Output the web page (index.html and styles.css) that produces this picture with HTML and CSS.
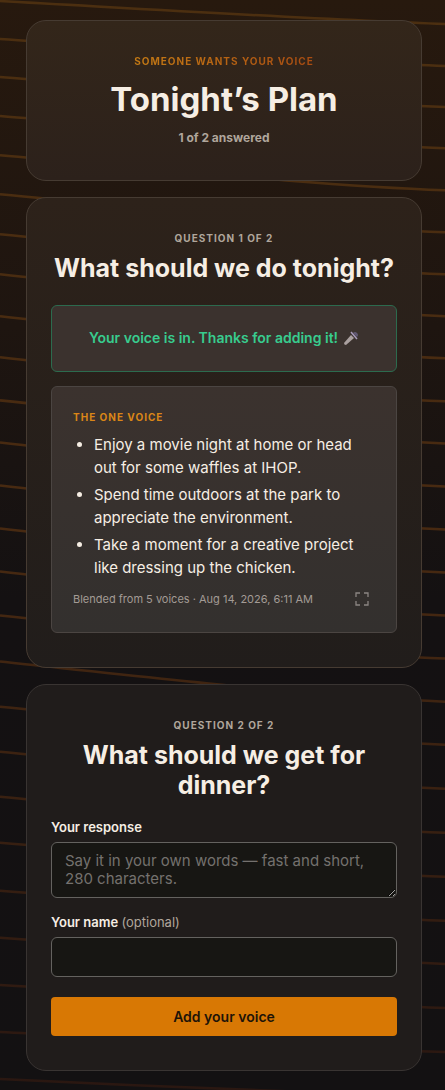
FILE: index.html
```html
<!DOCTYPE html>
<html lang="en">
<head>
<meta charset="utf-8">
<meta name="viewport" content="width=device-width, initial-scale=1">
<title>Tonight’s Plan</title>
<link rel="stylesheet" href="styles.css">
</head>
<body>
<svg class="waves" viewBox="0 0 445 1090" preserveAspectRatio="none" aria-hidden="true">
  <defs>
    <linearGradient id="wave" gradientUnits="userSpaceOnUse" x1="0" y1="0" x2="0" y2="1090">
      <stop offset="0" stop-color="#4c2f10"/>
      <stop offset=".5" stop-color="#472911"/>
      <stop offset="1" stop-color="#2a1711"/>
    </linearGradient>
  </defs>
  <path d="M0 1C180 11 330 20 445 24M0 39C180 51 330 62 445 66M0 77C180 91 330 103 445 107M0 116C180 131 330 144 445 148M0 155C180 171 330 186 445 190M0 194C180 211 330 228 445 232M0 234C180 252 330 270 445 274M0 274C180 293 330 312 445 316M0 316C180 335 330 354 445 358M0 357C180 377 330 397 445 401M0 400C180 419 330 439 445 443M0 442C180 462 330 482 445 486M0 485C180 505 330 525 445 529M0 528C180 548 330 568 445 572M0 571C180 591 330 611 445 615M0 615C180 634 330 654 445 658M0 661C180 680 330 697 445 701M0 706C180 723 330 740 445 744M0 751C180 768 330 784 445 788M0 796C180 812 330 828 445 832M0 842C180 857 330 872 445 876M0 890C180 903 330 916 445 920M0 937C180 949 330 959 445 963M0 984C180 994 330 1004 445 1007M0 1031C180 1040 330 1048 445 1051M0 1078C180 1087 330 1092 445 1095"/>
</svg>
<main class="page">
  <header class="card hero">
    <p class="eyebrow"><span class="eyebrow-text">Someone wants your voice</span></p>
    <h1 class="title">Tonight’s Plan</h1>
    <p class="progress">1 of 2 answered</p>
  </header>

  <section class="card question">
    <p class="step">Question 1 of 2</p>
    <h2 class="prompt">What should we do tonight?</h2>
    <p class="notice">Your voice is in. Thanks for adding it!
      <svg class="mic" viewBox="0 0 16 16" aria-hidden="true">
        <path d="M1 13L8 5L11 8L3 15Q1 15 1 13Z" fill="#aaa09f"/>
        <path d="M10 3Q12 1 14 3Q16 5 14 7Z" fill="#605873"/>
        <path d="M8 2L14 9" stroke="#a99cbb" stroke-width="1.5"/>
      </svg>
    </p>
    <article class="answer">
      <h3 class="answer-title">The One Voice</h3>
      <ul class="points">
        <li>Enjoy a movie night at home or head out for some waffles at IHOP.</li>
        <li>Spend time outdoors at the park to appreciate the environment.</li>
        <li>Take a moment for a creative project like dressing up the chicken.</li>
      </ul>
      <footer class="meta">
        <span>Blended from 5 voices · Aug 14, 2026, 6:11 AM</span>
        <button class="expand" type="button" aria-label="Expand">
          <svg viewBox="0 0 14 14" aria-hidden="true"><path d="M1 5V1H5M9 1H13V5M13 9V13H9M5 13H1V9"/></svg>
        </button>
      </footer>
    </article>
  </section>

  <section class="card question">
    <p class="step">Question 2 of 2</p>
    <h2 class="prompt">What should we get for dinner?</h2>
    <form class="form">
      <label class="label" for="response">Your response</label>
      <textarea class="field response" id="response" rows="2" placeholder="Say it in your own words — fast and short, 280 characters."></textarea>
      <label class="label" for="name">Your name <span class="optional">(optional)</span></label>
      <input class="field name" id="name" type="text">
      <button class="submit" type="button">Add your voice</button>
    </form>
  </section>
</main>
</body>
</html>
```
FILE: styles.css
```css
* {
  box-sizing: border-box;
}

body {
  position: relative;
  min-height: 100vh;
  margin: 0;
  background: linear-gradient(#27190e, #1e1510 30%, #141112 55%, #131112);
  color: #f6eee4;
  font-family: Inter, "Liberation Sans", sans-serif;
}

h1, h2, h3, p, ul {
  margin: 0;
}

.waves {
  position: absolute;
  inset: 0;
  width: 100%;
  height: 100%;
}

.waves path {
  fill: none;
  stroke: url(#wave);
  stroke-width: 2.5;
}

.page {
  position: relative;
  display: flex;
  flex-direction: column;
  gap: 16px;
  max-width: 720px;
  margin: 0 auto;
  padding: 20px 23px 20px 26px;
}

.card {
  padding: 32px 24px 34px;
  border: 1px solid #463b32;
  border-radius: 20px;
}

.hero {
  padding-bottom: 33px;
  background: linear-gradient(#33261a, #2c211b);
  text-align: center;
}

.eyebrow {
  font-size: 10px;
  font-weight: 700;
  line-height: 16px;
  letter-spacing: 1px;
  text-transform: uppercase;
}

.eyebrow-text {
  background: linear-gradient(90deg, #c67b14, #a84c12);
  background-clip: text;
  color: transparent;
}

.title {
  margin-top: 10px;
  font-size: 33px;
  font-weight: 700;
  line-height: 40px;
}

.progress {
  margin-top: 10px;
  color: #b0a69c;
  font-size: 12px;
  font-weight: 700;
  line-height: 18px;
}

.question {
  background: linear-gradient(#2d221a, #211d1b);
}

.question + .question {
  border-color: #393432;
  background: #201c1b;
}

.step {
  color: #b0a69c;
  font-size: 10px;
  font-weight: 700;
  line-height: 16px;
  letter-spacing: 1px;
  text-align: center;
  text-transform: uppercase;
}

.prompt {
  margin: 7px -8px 0;
  font-size: 25px;
  font-weight: 700;
  line-height: 30px;
  text-align: center;
}

.notice {
  display: flex;
  align-items: center;
  justify-content: center;
  gap: 5px;
  margin-top: 22px;
  padding: 21px 16px 22px;
  border: 1px solid #2c6b4e;
  border-radius: 6px;
  background: #3b322e;
  color: #38cc8e;
  font-size: 14px;
  font-weight: 600;
  line-height: 22px;
}

.mic {
  width: 16px;
  height: 16px;
}

.answer {
  margin-top: 14px;
  padding: 21px;
  border: 1px solid #4b4542;
  border-radius: 6px;
  background: linear-gradient(#3b322e, #33302e);
}

.answer-title {
  color: #db8617;
  font-size: 10px;
  font-weight: 700;
  line-height: 18px;
  letter-spacing: 1px;
  text-transform: uppercase;
}

.points {
  display: flex;
  flex-direction: column;
  gap: 4px;
  margin-top: 7px;
  padding-left: 21px;
  font-size: 15px;
  font-weight: 400;
  line-height: 23px;
}

.meta {
  display: flex;
  align-items: center;
  justify-content: space-between;
  margin-top: 8px;
  padding-right: 6px;
  color: #a39b95;
  font-size: 11px;
  line-height: 24px;
}

.expand {
  display: flex;
  padding: 0;
  border: 0;
  background: none;
  color: #8b8582;
}

.expand svg {
  width: 14px;
  height: 14px;
  fill: none;
  stroke: currentColor;
  stroke-width: 1.3;
}

.form {
  display: flex;
  flex-direction: column;
  margin-top: 18px;
}

.label {
  margin-bottom: 6px;
  font-size: 13px;
  font-weight: 600;
  line-height: 18px;
}

.optional {
  color: #b0a69c;
  font-weight: 400;
}

.field {
  width: 100%;
  border: 1px solid #64625f;
  border-radius: 6px;
  background: #171613;
  color: #f6eee4;
  font-family: inherit;
  font-size: 15px;
  line-height: 18px;
}

.field::placeholder {
  color: #74716e;
}

.response {
  height: 56px;
  margin-bottom: 15px;
  padding: 9px 13px;
  resize: vertical;
}

.name {
  height: 40px;
  margin-bottom: 20px;
  padding: 8px 13px;
}

.submit {
  height: 39px;
  border: 0;
  border-radius: 4px;
  background: #d87804;
  color: #1e1408;
  font-family: inherit;
  font-size: 14px;
  font-weight: 600;
}
```
